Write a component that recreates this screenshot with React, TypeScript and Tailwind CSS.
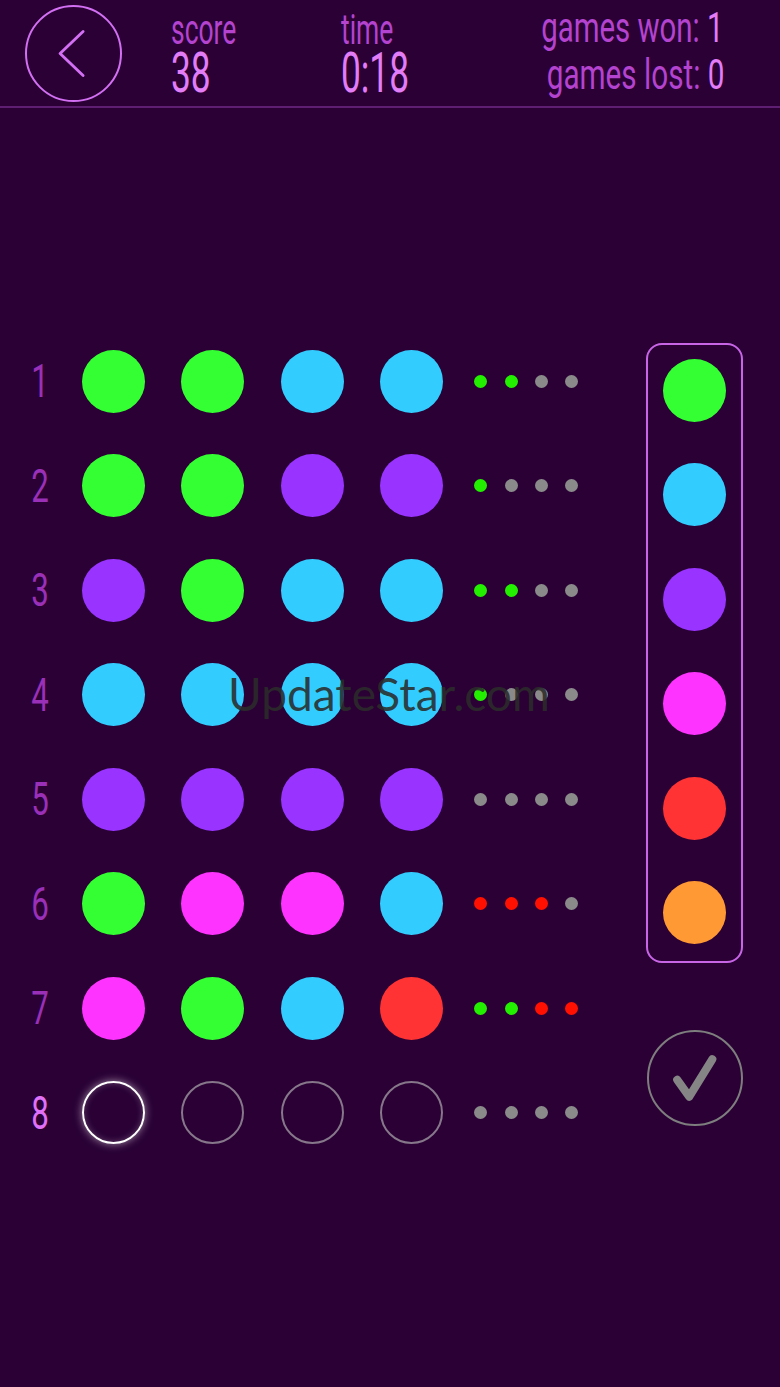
import React from 'react';

// peg colours
const PEG: Record<string, string> = {
  g: 'bg-[#33ff33]',
  b: 'bg-[#33ccff]',
  p: 'bg-[#9933ff]',
  m: 'bg-[#ff33ff]',
  r: 'bg-[#ff3333]',
  o: 'bg-[#ff9933]',
};

const HINT: Record<string, string> = {
  g: 'bg-[#22f000]',
  r: 'bg-[#ff1000]',
  x: 'bg-[#8a8a8a]',
};

const rows = [
  { pegs: 'ggbb', hints: 'ggxx' },
  { pegs: 'ggpp', hints: 'gxxx' },
  { pegs: 'pgbb', hints: 'ggxx' },
  { pegs: 'bbbb', hints: 'gxxx' },
  { pegs: 'pppp', hints: 'xxxx' },
  { pegs: 'gmmb', hints: 'rrrx' },
  { pegs: 'mgbr', hints: 'ggrr' },
  { pegs: '', hints: 'xxxx' },
];

const palette = ['g', 'b', 'p', 'm', 'r', 'o'];

const font = "font-['Roboto',sans-serif] font-normal";

const StatBlock: React.FC<{ label: string; value: string }> = ({ label, value }) => (
  <div className={`flex flex-col ${font}`}>
    <span className="mt-[12px] block h-[36px] text-[42px] leading-[36px] text-[#b443cf] origin-left scale-x-[0.63] whitespace-nowrap">
      {label}
    </span>
    <span className="mt-[1px] block h-[48px] text-[56px] leading-[48px] text-[#e27cf7] origin-left scale-x-[0.63] whitespace-nowrap">
      {value}
    </span>
  </div>
);

const App: React.FC = () => {
  return (
    <div className="relative min-h-screen w-[780px] bg-[#2a0035] overflow-hidden">
      {/* header */}
      <div className="flex h-[108px] items-start border-b-2 border-[#5e1f72]">
        <button className="ml-[25px] mt-[5px] flex h-[97px] w-[97px] items-center justify-center rounded-full border-[2.5px] border-[#d26ff2]">
          <svg width="97" height="97" viewBox="0 0 97 97" fill="none">
            <path
              d="M58.5 25.5 L34.5 48.5 L58.5 71.5"
              stroke="#d26ff2"
              strokeWidth={3}
              strokeLinecap="round"
              strokeLinejoin="round"
            />
          </svg>
        </button>
        <div className="ml-[49px] w-[170px]">
          <StatBlock label="score" value="38" />
        </div>
        <div className="w-[120px]">
          <StatBlock label="time" value="0:18" />
        </div>
        <div className={`ml-auto mr-[56px] pt-[7px] flex flex-col items-end ${font}`}>
          <span className="block h-[46px] text-[42px] leading-none origin-right scale-x-[0.7] whitespace-nowrap">
            <span className="text-[#b443cf]">games won: </span>
            <span className="text-[#e27cf7]">1</span>
          </span>
          <span className="block text-[43px] leading-none origin-right scale-x-[0.69] whitespace-nowrap">
            <span className="text-[#b443cf]">games lost: </span>
            <span className="text-[#e27cf7]">0</span>
          </span>
        </div>
      </div>

      {/* board */}
      <div className="flex pt-[235px] pr-[37px]">
        <div className="flex flex-col gap-[41.57px] pt-[6.5px]">
          {rows.map((row, i) => (
            <div key={i} className="flex h-[63px] items-center">
              <div className="flex w-[80px] justify-center">
                <span
                  className={`${font} text-[46px] leading-none scale-x-[0.68] ${
                    i === 7 ? 'text-[#e070f8]' : 'text-[#9a2fb8]'
                  }`}
                >
                  {i + 1}
                </span>
              </div>
              <div className="ml-[1.5px] flex gap-[36.67px]">
                {row.pegs
                  ? row.pegs.split('').map((c, j) => (
                      <div key={j} className={`h-[63px] w-[63px] rounded-full ${PEG[c]}`} />
                    ))
                  : [0, 1, 2, 3].map((j) => (
                      <div
                        key={j}
                        className={
                          j === 0
                            ? 'h-[63px] w-[63px] rounded-full border-[2.5px] border-white shadow-[0_0_8px_rgba(255,255,255,0.55),inset_0_0_6px_rgba(255,255,255,0.25)]'
                            : 'h-[63px] w-[63px] rounded-full border-2 border-[#86778a]'
                        }
                      />
                    ))}
              </div>
              <div className="ml-[31px] flex gap-[17.33px]">
                {row.hints.split('').map((c, j) => (
                  <div key={j} className={`h-[13px] w-[13px] rounded-full ${HINT[c]}`} />
                ))}
              </div>
            </div>
          ))}
        </div>

        <div className="ml-auto flex w-[97px] flex-col items-center">
          <div className="flex h-[620px] w-[97px] flex-col items-center gap-[41.6px] rounded-[16px] border-2 border-[#c865e6] pt-[13.5px]">
            {palette.map((c) => (
              <div key={c} className={`h-[63px] w-[63px] shrink-0 rounded-full ${PEG[c]}`} />
            ))}
          </div>
          <button className="mt-[67px] flex h-[96px] w-[96px] items-center justify-center rounded-full border-[2.5px] border-[#7e7e7e]">
            <svg width="96" height="96" viewBox="0 0 96 96" fill="none">
              <path
                d="M29.5 50 L42 67.5 L66 28.5"
                stroke="#858585"
                strokeWidth={8.5}
                strokeLinecap="round"
                strokeLinejoin="round"
              />
            </svg>
          </button>
        </div>
      </div>

      {/* watermark */}
      <div className="pointer-events-none absolute left-[228px] top-[671px] font-['Lato',sans-serif] text-[46px] leading-none text-[rgba(42,44,42,0.88)] whitespace-nowrap">
        UpdateStar.com
      </div>
    </div>
  );
};

export default App;
